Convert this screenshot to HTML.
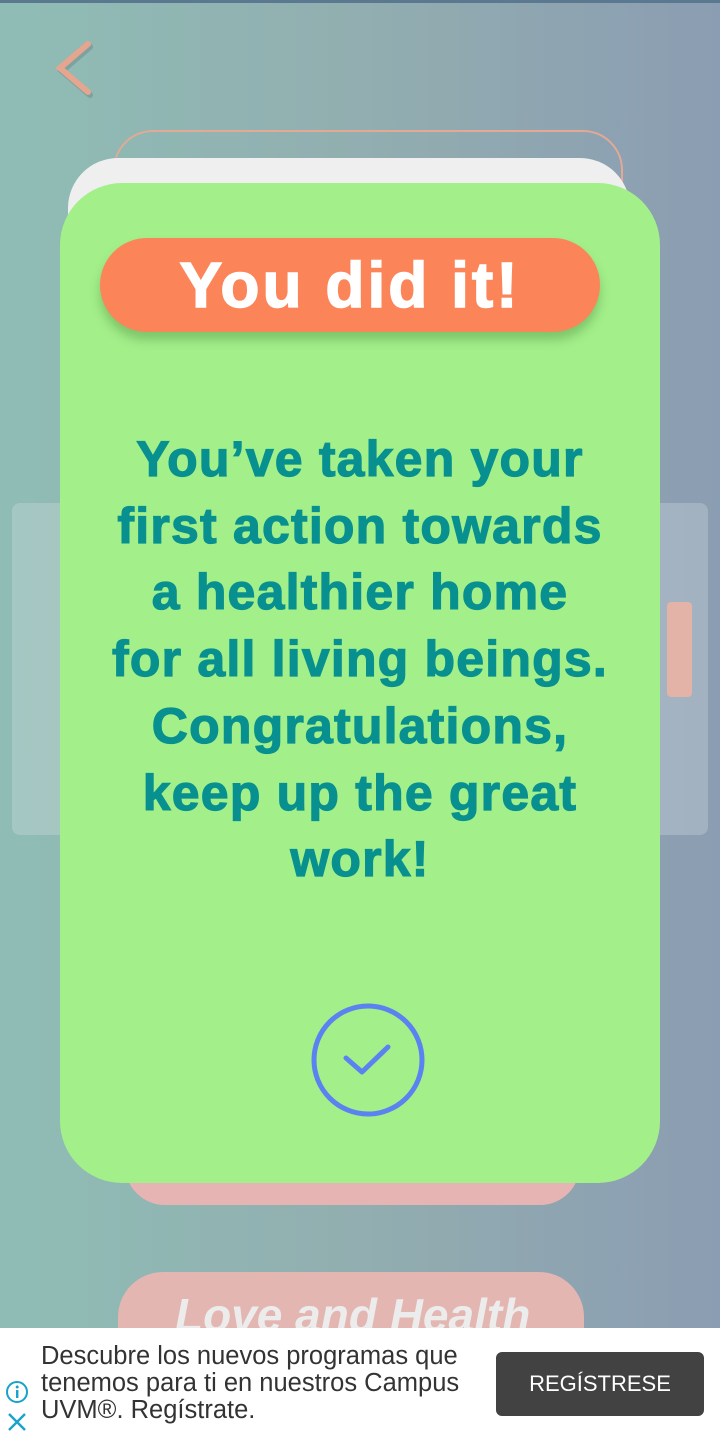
<!DOCTYPE html>
<html><head><meta charset="utf-8"><style>
*{margin:0;padding:0;box-sizing:border-box}
body{width:720px;height:1440px;position:relative;overflow:hidden;font-family:"Liberation Sans",sans-serif;background:linear-gradient(90deg,#8fbdb5 0%,#92aeb0 50%,#8b9db2 100%)}
.abs{position:absolute}
</style></head><body>
<div class="abs" style="left:0;top:0;width:720px;height:3px;background:#5a7890"></div>
<svg class="abs" style="left:50px;top:38px" width="50" height="60"><polyline points="38,6 10,30 38,54" fill="none" stroke="#6b8a8a" stroke-width="6" stroke-linecap="round" opacity=".5" transform="translate(2,3)"/><polyline points="38,6 10,30 38,54" fill="none" stroke="#e5a58e" stroke-width="6" stroke-linecap="round"/></svg>
<div class="abs" style="left:12px;top:503px;width:696px;height:332px;background:rgba(220,225,228,.3);border-radius:8px"></div>
<div class="abs" style="left:667px;top:602px;width:25px;height:95px;background:#e2b3a6;border-radius:4px"></div>
<div class="abs" style="left:113px;top:130px;width:510px;height:400px;border:2px solid #e3a994;border-radius:40px"></div>
<div class="abs" style="left:68px;top:158px;width:562px;height:700px;background:#efefef;border-radius:50px"></div>
<div class="abs" style="left:125px;top:1100px;width:455px;height:105px;background:#e6b5b3;border-radius:40px"></div>
<div class="abs" style="left:118px;top:1272px;width:466px;height:120px;background:#e3b6b2;border-radius:45px"></div>
<div class="abs" style="left:175px;top:1288px;font-size:46px;font-weight:bold;font-style:italic;color:#ececec">Love and Health</div>
<div class="abs" style="left:60px;top:183px;width:600px;height:1000px;background:#a3ef8a;border-radius:62px"></div>
<div class="abs" style="left:100px;top:238px;width:500px;height:94px;background:#fb8558;border-radius:47px;box-shadow:0 8px 10px rgba(60,120,50,.35);color:#fff;font-size:64px;font-weight:bold;text-align:center;line-height:94px;letter-spacing:3px;-webkit-text-stroke:1.5px #fff">You did it!</div>
<div class="abs" style="left:40px;top:426px;width:640px;text-align:center;color:#07908f;font-size:50px;font-weight:bold;line-height:66.7px;letter-spacing:1.2px;-webkit-text-stroke:1.2px #07908f">You’ve taken your<br>first action towards<br>a healthier home<br>for all living beings.<br>Congratulations,<br>keep up the great<br>work!</div>
<svg class="abs" style="left:308px;top:1002px" width="120" height="120"><circle cx="60" cy="58" r="54" fill="none" stroke="#5b82f0" stroke-width="5"/><polyline points="38,56 54,70 80,45" fill="none" stroke="#5b82f0" stroke-width="5" stroke-linecap="round" stroke-linejoin="round"/></svg>
<div class="abs" style="left:0;top:1328px;width:720px;height:112px;background:#fff"></div>
<div class="abs" style="left:41px;top:1343px;font-size:25.5px;line-height:27px;color:#333;white-space:nowrap">Descubre los nuevos programas que<br>tenemos para ti en nuestros Campus<br>UVM®. Regístrate.</div>
<div class="abs" style="left:496px;top:1352px;width:208px;height:64px;background:#424242;border-radius:6px;color:#fff;font-size:22px;text-align:center;line-height:64px">REGÍSTRESE</div>
<svg class="abs" style="left:5px;top:1380px" width="24" height="56"><circle cx="12" cy="12" r="10" fill="none" stroke="#1aa3c8" stroke-width="2"/><rect x="11" y="10" width="2.4" height="8" fill="#1aa3c8"/><circle cx="12.2" cy="7" r="1.5" fill="#1aa3c8"/><path d="M4 34 L20 50 M20 34 L4 50" stroke="#1aa3c8" stroke-width="2.4"/></svg>
</body></html>
